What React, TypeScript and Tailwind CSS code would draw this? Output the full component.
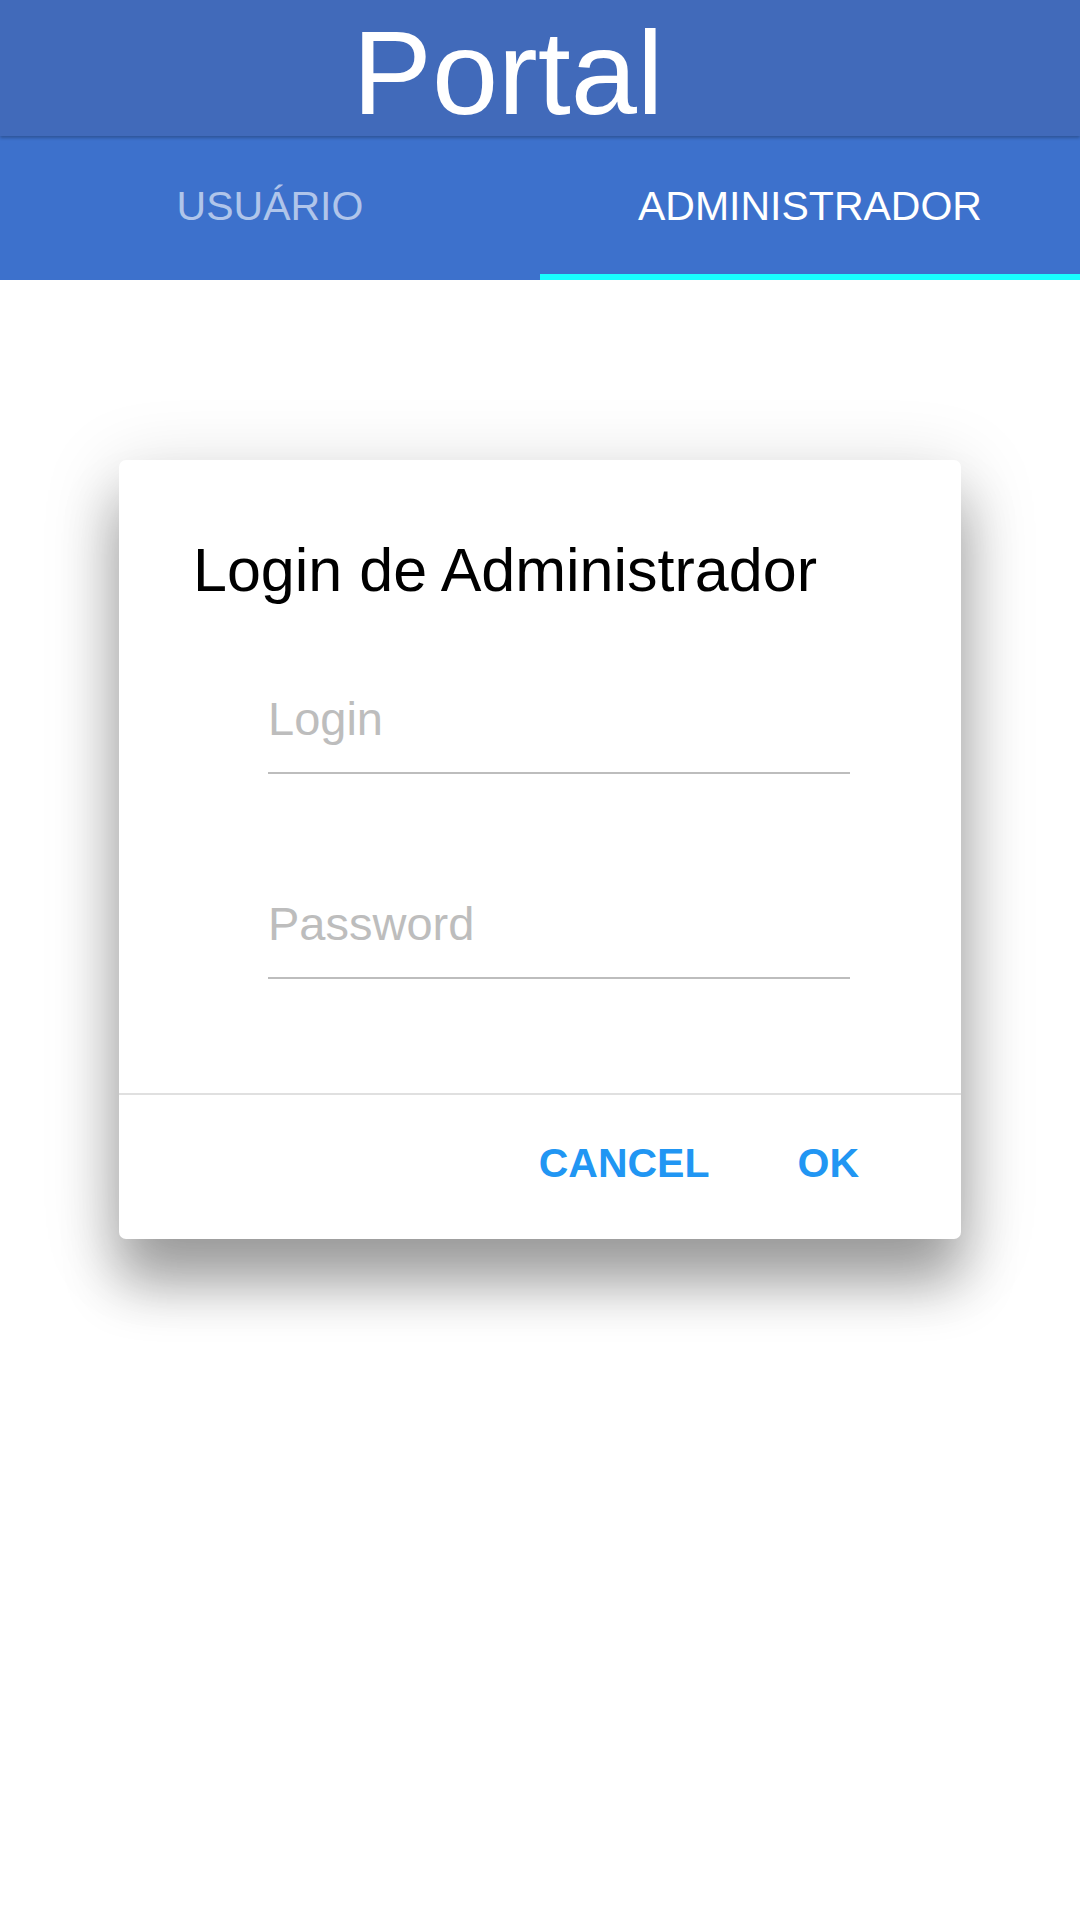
import React from "react";

export default function App() {
  const font = { fontFamily: '"Liberation Sans", Arial, sans-serif' };
  return (
    <div className="w-[1080px] h-[1920px] bg-white overflow-hidden" style={font}>
      <div className="relative z-10 h-[136px] bg-[#416ABA] shadow-[0_2px_3px_rgba(0,0,0,0.25)] flex justify-center pr-[64px]">
        <div className="pt-[9px] leading-[127px] text-[119px] text-white">Portal</div>
      </div>
      <div className="h-[144px] bg-[#3D71CC] flex">
        <div className="flex-1 flex flex-col">
          <div className="flex-1 pt-[46px] text-center text-[41px] leading-[48px] text-white/60">USUÁRIO</div>
          <div className="h-[6px]" />
        </div>
        <div className="flex-1 flex flex-col">
          <div className="flex-1 pt-[46px] text-center text-[41px] leading-[48px] text-white">ADMINISTRADOR</div>
          <div className="h-[6px] bg-[#18FFFF]" />
        </div>
      </div>
      <div className="pt-[180px] flex justify-center">
        <div className="w-[842px] bg-white rounded-[7px] shadow-[0_45px_55px_rgba(0,0,0,0.32),0_15px_75px_5px_rgba(0,0,0,0.15)]">
          <div className="pl-[74px] pt-[74px] text-[61px] leading-[72px] text-black">Login de Administrador</div>
          <div className="ml-[149px] mr-[111px] mt-[85px] pb-[25px] border-b-2 border-[#BDBDBD] text-[47px] leading-[56px] text-[#BDBDBD]">Login</div>
          <div className="ml-[149px] mr-[111px] mt-[122px] pb-[25px] border-b-2 border-[#BDBDBD] text-[47px] leading-[56px] text-[#BDBDBD]">Password</div>
          <div className="mt-[114px] h-[2px] bg-[#E0E0E0]" />
          <div className="flex justify-end gap-[88px] pr-[102px] pt-[44px] pb-[52px] text-[41px] leading-[48px] font-bold text-[#2196F3]">
            <span>CANCEL</span>
            <span>OK</span>
          </div>
        </div>
      </div>
    </div>
  );
}
